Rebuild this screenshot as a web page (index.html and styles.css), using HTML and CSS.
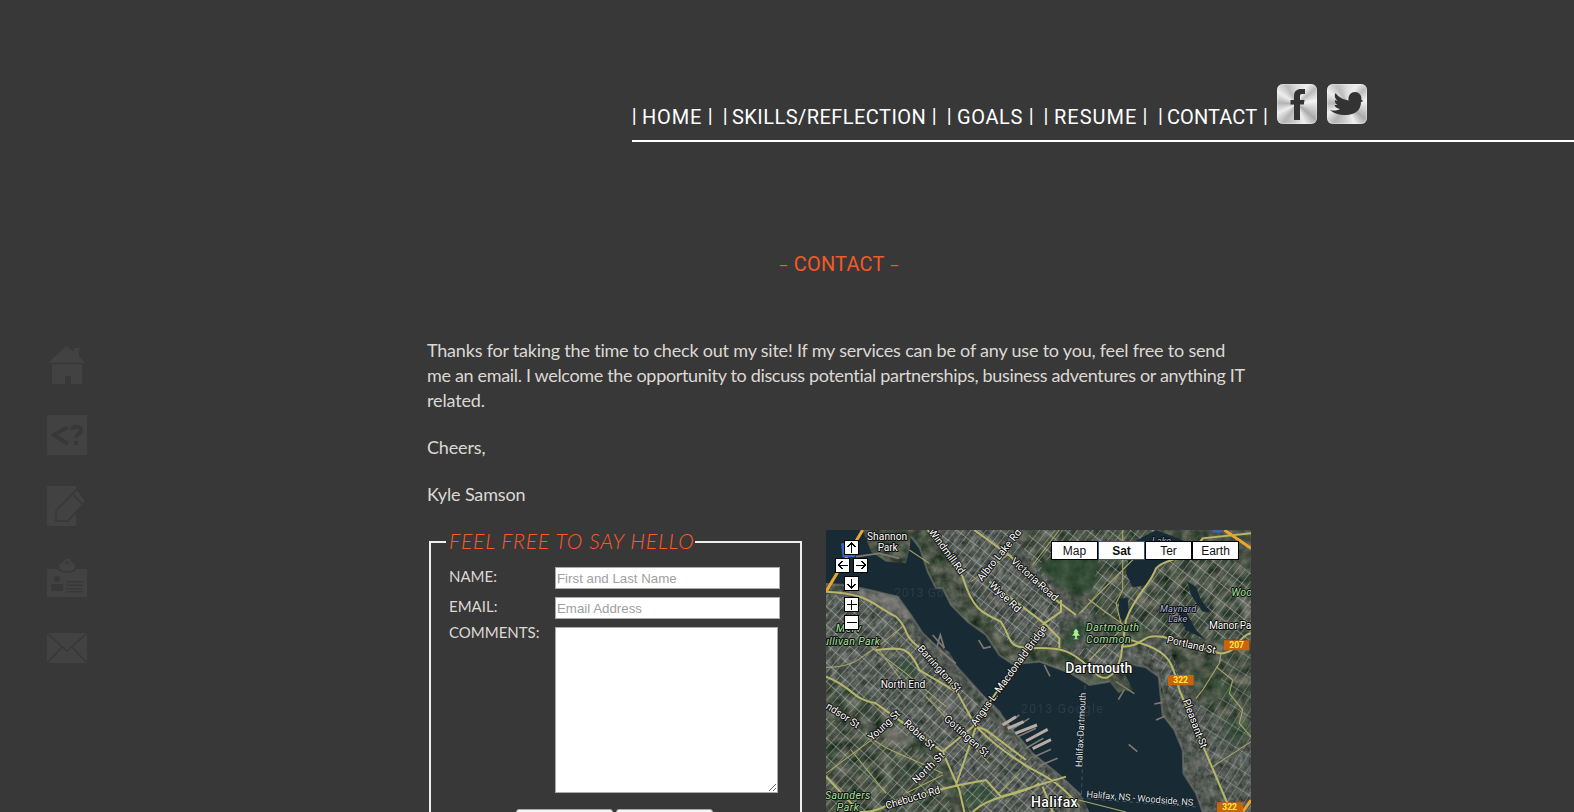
FILE: index.html
```html
<!DOCTYPE html>
<html lang="en">
<head>
<meta charset="utf-8">
<title>Kyle Samson - Contact</title>
<link rel="stylesheet" href="styles.css">
</head>
<body>
<header class="header">
  <nav class="nav">
    <a class="nav-item home"><i>|</i><span>HOME</span><i>|</i></a>
    <a class="nav-item skills"><i>|</i><span>SKILLS/REFLECTION</span><i>|</i></a>
    <a class="nav-item goals"><i>|</i><span>GOALS</span><i>|</i></a>
    <a class="nav-item resume"><i>|</i><span>RESUME</span><i>|</i></a>
    <a class="nav-item contact"><i>|</i><span>CONTACT</span><i>|</i></a>
  </nav>
  <a class="social"><svg width="40" height="40" viewBox="0 0 40 40"><path fill="#333" d="M17 36V20.500h-3.500V16H17v-4c0-5 3-7 7-7h4v5h-3c-1.500 0-2 .8-2 2v4h4.500l-.7 4.500H23V36z"/></svg></a>
  <a class="social"><svg width="40" height="40" viewBox="0 0 40 40"><path fill="#333" d="M3 26c4 1 8 .5 10-1-3-.3-4.500-1.500-5.500-4h3C8 19.500 7.500 17.500 8 16l2.500 1C7.500 14 7 11.500 8.500 9c4 5 8 6.500 13 7.500C21 11 24 8 28 8c2 0 3.500.8 4.500 2 1.500 1 2 3 2 6l2 1-2.500 1C34 26 28 31 19 31 12 31 6 29 3 26z"/></svg></a>
</header>
<div class="page">
  <aside class="side">
    <svg width="40" height="40" viewBox="0 0 40 40"><path d="M1 19 19 2l8 6V4h5v8l6 7H35v21H24v-8h-6v8H5V19z"/><path class="cut-line" d="M2 19.500h36"/></svg>
    <svg width="40" height="40" viewBox="0 0 40 40"><path d="M0 0h40v40H0z"/><path class="cut-line thick" d="M21 12 7 20l14 9M25 15c0-5 9-4 9 0s-5 4-5 8M29 26v4"/></svg>
    <svg width="40" height="40" viewBox="0 0 40 40"><path d="M0 0h29v40H0z"/><path class="pencil" d="M9 25 30 3l9 12-18 20H9z"/><path class="cut-line" d="m26 8 9 10"/></svg>
    <svg width="40" height="40" viewBox="0 0 40 40"><path d="M0 12h11c1 5 17 5 18 0h11v28H0zM12 9c0-4 4-2 5-5s6-3 7 0 4 1 4 5-3 5-8 5-8-1-8-5z"/><circle class="cut" cx="20" cy="6" r="1.500"/><circle class="cut" cx="10" cy="22" r="3"/><path class="cut" d="M4 27h12v7H4zM19 24h17v1.500H19zM19 27.500h17V29H19zM19 31h17v1.500H19zM19 34h17v1.500H19z"/></svg>
    <svg width="40" height="40" viewBox="0 0 40 40"><path d="M0 5h40v30H0z"/><path class="cut-line" d="m0 5 20 18L40 5M0 35l15-16M40 35 25 19"/></svg>
  </aside>
  <main class="main">
    <h1 class="title"><span>–</span> CONTACT <span>–</span></h1>
    <p><span class="l1">Thanks for taking the time to check out my site! If my services can be of any use to you, feel free to send</span><br><span class="l2">me an email. I welcome the opportunity to discuss potential partnerships, business adventures or anything IT</span><br><span>related.</span></p>
    <p>Cheers,</p>
    <p>Kyle Samson</p>
    <div class="row">
      <form class="form">
        <fieldset class="box">
          <legend><span>FEEL FREE TO SAY HELLO</span></legend>
          <div class="field"><label>NAME:</label><input placeholder="First and Last Name"></div>
          <div class="field"><label>EMAIL:</label><input placeholder="Email Address"></div>
          <div class="field comments"><label>COMMENTS:</label><textarea></textarea></div>
          <div class="buttons"><button type="button"></button><button type="button"></button></div>
        </fieldset>
      </form>
      <div class="map">
        <svg class="map-canvas" width="425" height="282" viewBox="0 0 1275 846">
          <defs>
            <filter id="ground" x="0" y="0" width="100%" height="100%" color-interpolation-filters="sRGB">
              <feTurbulence type="fractalNoise" baseFrequency=".03" numOctaves="5" seed="8"/>
              <feColorMatrix values=".5 0 0 0 .03  .42 .08 0 0 .07  .42 .03 0 0 .04  0 0 0 0 1"/>
            </filter>
            <filter id="urban" x="0" y="0" width="100%" height="100%" color-interpolation-filters="sRGB">
              <feTurbulence type="fractalNoise" baseFrequency=".06" numOctaves="4" seed="3" result="n"/>
              <feColorMatrix in="n" values=".6 0 0 0 .05  .55 0 0 0 .09  .55 0 0 0 .09  0 0 0 0 1" result="c"/>
              <feComposite in="c" in2="SourceGraphic" operator="in"/>
            </filter>
            <filter id="soft" x="-20%" y="-20%" width="140%" height="140%"><feGaussianBlur stdDeviation="7"/></filter>
            <pattern id="gridA" width="19" height="42" patternUnits="userSpaceOnUse" patternTransform="rotate(42)"><path d="M0 1.500H19M1.500 0V42" class="street"/></pattern>
            <pattern id="gridB" width="40" height="18" patternUnits="userSpaceOnUse" patternTransform="rotate(-52)"><path d="M0 1.500H40M1.500 0V18" class="street"/></pattern>
            <pattern id="gridC" width="22" height="50" patternUnits="userSpaceOnUse" patternTransform="rotate(32)"><path d="M0 1.500H22M1.500 0V50" class="street"/></pattern>
          </defs>
          <rect width="1275" height="846" filter="url(#ground)"/>
          <g filter="url(#urban)" opacity=".6">
            <path d="M0 160 200 190 265 260 500 500 650 640 760 740 790 846H480L400 760 330 640 130 500 0 440z"/>
            <path d="M260 0H330L440 200 540 320 700 350 850 430 910 400 1000 450 1060 640 1100 846H1275V640L1100 500 1010 320 880 340 760 220 640 120 560 0z"/>
          </g>
          <g filter="url(#soft)">
            <path class="wood" d="M640 100 730 60 830 70 800 190 700 170zM740 270 800 290 740 350 705 350zM420 780 470 760 520 800 450 830 410 820zM215 390 250 380 280 440 230 440zM1150 450 1230 470 1200 510zM1190 570 1260 590 1250 640 1210 630z"/>
            <path class="pale" d="M170 590 260 600 250 650 190 650zM330 490 400 520 370 560zM1080 680 1140 690 1120 720zM650 290 710 310 690 340zM1240 210H1275V280zM60 180 200 190 260 250 240 270z"/>
          </g>
          <path fill="url(#gridA)" d="M0 190 150 220 240 300 500 570 720 780 700 846H430L380 700 330 650 90 560 0 510zM0 560 330 680 380 846H0z"/>
          <path fill="url(#gridB)" d="M330 40 420 150 470 250 550 340 700 350 700 210 550 90 620 0H360zM560 0H1000L1010 130 900 260 760 250 800 180 820 80 720 60 640 100 680 180 640 130zM880 100 1140 30 1275 130V330L1010 320 920 280zM730 360 890 340 880 410 830 420z"/>
          <path fill="url(#gridC)" d="M950 340 1040 380 1090 540 1190 500 1180 390 1275 340V846H1220L1100 640 1010 440z" opacity=".75"/>
          <g class="water">
            <path d="M0 0H110L135 65 180 95 240 100 250 60 255 20 282 55 305 125 330 175 350 175 375 225 425 275 480 315 520 375 560 402 640 395 735 430 790 465 850 455 878 490 895 480 928 493 895 430 925 405 960 412 998 440 1010 555 1045 600 1070 660 1072 730 1110 790 1130 846H790L765 795 735 765 700 735 620 670 560 600 520 540 465 490 400 420 370 365 330 345 290 310 255 255 215 200 140 182 60 165 0 160z"/>
            <path d="M915 40 990 0 1070 30 1075 70 1000 105 965 165 920 172 900 130z"/>
            <path d="M1085 155 1110 170 1125 210 1155 245 1130 245 1095 195zM880 205 905 205 908 255 890 275 878 245zM1050 235 1080 245 1110 300 1140 330 1080 300z"/>
          </g>
          <path class="shore" d="M255 20 282 55 305 125 330 175 350 175 375 225 425 275 480 315 520 375 560 402 640 395 735 430 790 465 850 455M925 405 960 412 998 440 1010 555 1045 600 1070 660 1072 730 1110 790 1130 846M0 162 60 165 140 182 215 200 255 255 290 310 370 385 465 490 560 600 620 670 700 735 765 795"/>
          <path class="pier" d="m320 315 35 40m-22-5 10-35 12 40m-15 5 50 40M458 330l15 25 22-5M655 405l17 34M870 455l55 36m-30-12-18 30M535 585l45-30M555 600l55-35M575 620l55-25M600 655l52-30M625 680l50-22M645 705l50-20M985 522l25-5M990 570l28-12M908 643l26 22M90 80l70-10 60 15"/>
          <path class="dock" d="m530 585 40-25m-25 35 48-20m-25 35 65-25m-33 48 65-35m-45 58 55-27"/>
          <g class="road thin">
            <path d="M0 412C100 412 110 370 145 358L230 290M145 358 240 430 360 530M75 660 180 790M0 730 150 620M120 610C170 660 250 680 350 730M350 735 240 790M620 105 700 0M545 75 435 155M790 210 900 290M760 250 830 180 960 50M890 0V180L870 220 890 300M790 390 890 295M1185 370 1180 400 1130 480 1110 505M1170 410 1220 450 1210 490 1250 540 1240 580 1275 620M1160 710 1275 635M720 800 900 846M250 60 310 100M160 360 225 450M520 790 580 730M300 500 490 700"/>
          </g>
          <g class="road">
            <path d="M305 0 410 140C440 240 470 250 525 275 560 330 540 350 610 355 730 350 740 370 800 420 830 460 865 450 885 380L900 270C930 190 970 170 990 115 1020 80 1080 100 1130 25L1275 10"/>
            <path d="M445 0 555 80 690 210 750 255M490 155 655 280 700 325V355M440 590 655 280 705 245V210M885 350C960 350 940 310 1010 320L1180 370C1240 370 1230 320 1275 310M900 325 960 345C1030 370 1040 400 1060 480L1215 846"/>
            <path d="M0 185C130 190 140 225 210 260 260 310 220 310 290 360L390 480 450 590C500 640 540 670 590 700 630 730 690 740 760 830M150 360C230 350 250 350 280 420L390 485M0 440C80 470 80 510 150 520L205 560 350 665 440 590M350 665 400 780 415 846M250 800 400 765 480 750 525 800 720 740M0 740 100 846M390 765 450 590 480 600 600 690M650 770 680 846M100 846C170 850 200 805 250 800M440 846C500 790 580 800 640 760"/>
          </g>
          <path class="highway" d="M110 0 0 185M1195 0 1275 55M1250 846 1275 810"/>
          <path class="dash" d="m778 445-12 360 350 26"/>
          <g class="watermark"><text x="205" y="202" textLength="225">2013 Google</text><text x="585" y="548" textLength="245">2013 Google</text></g>
          <g class="label">
            <text x="123" y="31" textLength="121">Shannon</text><text x="155" y="63" textLength="60">Park</text>
            <text transform="translate(307 5) rotate(54)" textLength="161">Windmill Rd</text>
            <text transform="translate(468 155) rotate(-51)" textLength="190">Albro Lake Rd</text>
            <text transform="translate(553 96) rotate(42)" textLength="178">Victoria Road</text>
            <text transform="translate(488 167) rotate(44)" textLength="118">Wyse Rd</text>
            <text transform="translate(449 590) rotate(-54)" textLength="365">Angus L. Macdonald Bridge</text>
            <text transform="translate(273 357) rotate(48)" textLength="178">Barrington St</text>
            <text transform="translate(352 569) rotate(42)" textLength="169">Gottingen St</text>
            <text transform="translate(231 582) rotate(43)" textLength="115">Robie St</text>
            <text transform="translate(138 634) rotate(-43)" textLength="118">Young St</text>
            <text transform="translate(271 762) rotate(-44)" textLength="119">North St</text>
            <text transform="translate(182 838) rotate(-17)" textLength="170">Chebucto Rd</text>
            <text transform="translate(-2 534) rotate(33)" textLength="113">ndsor St</text>
            <text transform="translate(1070 512) rotate(69)" textLength="154">Pleasant St</text>
            <text transform="translate(1021 338) rotate(13)" textLength="149">Portland St</text>
            <text transform="translate(768 712) rotate(-87)" textLength="224" class="ferry">Halifax-Dartmouth</text>
            <text transform="translate(781 802) rotate(4.500)" textLength="321" class="ferry">Halifax, NS - Woodside, NS</text>
            <text x="164" y="474" textLength="134">North End</text>
            <text x="1149" y="296" textLength="152">Manor Park</text>
            <text x="718" y="428" textLength="201" class="city">Dartmouth</text>
            <text x="615" y="830" textLength="140" class="city">Halifax</text>
            <text x="978" y="42" class="lake">Lake</text><text x="1002" y="246" textLength="109" class="lake">Maynard</text><text x="1027" y="276" textLength="57" class="lake">Lake</text>
            <g class="park"><text x="30" y="307" textLength="75">Merv</text><text x="-8" y="345" textLength="170">ullivan Park</text><text x="780" y="304" textLength="159">Dartmouth</text><text x="780" y="340" textLength="134">Common</text><text x="1216" y="199">Wood</text><text x="-3" y="807" textLength="136">Saunders</text><text x="32" y="843" textLength="67">Park</text></g>
          </g>
          <path fill="#a9f092" stroke="#243b25" stroke-width="2" d="m750 294 10 13-4 1 8 10h-10v7h5v4h-18v-4h5v-7h-10l8-10-4-1z"/>
          <g class="shield"><path d="M1194 331h76v30h-76zM1026 435h77v31h-77zM1173 817h78v29h-78z"/><text x="1210" y="355" textLength="44">207</text><text x="1042" y="459" textLength="44">322</text><text x="1189" y="841" textLength="44">322</text></g>
          <path fill="#3569bd" d="M45 40h50l-8 42H50zM1158 0h34l-10 8h-18z"/>
        </svg>
        <div class="types"><b class="type">Map</b><b class="type active">Sat</b><b class="type">Ter</b><b class="type">Earth</b></div>
        <svg class="controls" width="33" height="89" viewBox="0 0 33 89" shape-rendering="crispEdges">
          <path fill="#fff" stroke="#000" d="M9.500.5h14v14h-14zM.5 18.500h14v14H.5zM18.500 18.500h14v14h-14zM9.500 36.500h14v14h-14zM9.500 57.500h14v14h-14zM9.500 75.500h14v14h-14z"/>
          <path fill="none" stroke="#000" d="M16.500 3v10M12.500 7.500l4-4 4 4M3 25.500h10M7.500 21.500l-4 4 4 4M21 25.500h10M26.500 21.500l4 4-4 4M16.500 39v10M12.500 44.500l4 4 4-4M16.500 60v10M12 64.500h10M12 82.500h10"/>
        </svg>
      </div>
    </div>
  </main>
</div>
</body>
</html>
```

FILE: styles.css
```css
* { box-sizing: border-box; }
body { margin: 0; height: 812px; overflow: hidden; background: #383838; color: #ddd8d4; font-family: Lato, "Open Sans", sans-serif; }
.header { display: flex; align-items: flex-end; height: 142px; margin-left: 632px; padding-bottom: 16px; border-bottom: 2px solid #fff; color: #fff; }
.nav { display: flex; gap: 12px; padding-left: 1px; margin-right: 10px; font: 20px/28px Roboto, sans-serif; }
.nav-item { display: flex; height: 21px; }
.nav-item i { font-style: normal; width: 3px; display: flex; justify-content: center; font-size: 20px; line-height: 26px; }
.nav-item i:first-child { margin-right: 6px; }
.nav-item i:last-child { margin-left: auto; }
.home { width: 79px; letter-spacing: .8px; }
.skills { width: 212px; letter-spacing: .45px; }
.goals { width: 85px; letter-spacing: .6px; }
.resume { width: 102px; letter-spacing: 1px; }
.contact { width: 108px; letter-spacing: .1px; }
.skills i:first-child, .contact i:first-child { margin-right: 5px; }
.social { width: 40px; height: 40px; margin-right: 10px; border-radius: 6px; background: conic-gradient(#ddd, #eee 8%, #bbb 14%, #f4f4f4 22%, #ccc 30%, #aaa 36%, #eee 44%, #ccc 52%, #b4b4b4 60%, #eee 68%, #b4b4b4 76%, #eee 84%, #bbb 92%, #ddd); box-shadow: inset 0 0 2px #fff; }
.social svg { display: block; }
.page { display: grid; grid-template-columns: 427px 824px; }
.side { display: flex; flex-direction: column; gap: 31px; padding: 202px 0 0 47px; fill: #424242; }
.cut { fill: #383838; }
.cut-line { fill: none; stroke: #383838; stroke-width: 1.5; }
.cut-line.thick { stroke-width: 4; }
.pencil { stroke: #383838; stroke-width: 1.5; }
.title { height: 27px; margin: 109px 0 60px; font: 20px/27px Roboto, sans-serif; letter-spacing: .2px; color: #f15a29; text-align: center; }
.title span { font-size: 15px; line-height: 0; }
.main p { margin: 0 0 22px; font-size: 18px; line-height: 25px; letter-spacing: -.15px; white-space: nowrap; }
.main .l1 { letter-spacing: -.2px; }
.main .l2 { letter-spacing: -.33px; }
.row { display: flex; justify-content: space-between; margin-top: 23px; }
.form { width: 375px; padding: 0 0 0 2px; }
.box { height: 330px; margin: 0; padding: 13px 0 0 18px; border: 2px solid #eee; }
.box legend { margin-left: -3px; padding: 0 0 0 3px; height: 24px; font-size: 21px; line-height: 22px; letter-spacing: .8px; font-style: italic; font-weight: 300; color: #ff5a26; white-space: nowrap; }
.field { display: flex; align-items: flex-start; margin-bottom: 8px; }
.field label { width: 106px; font-size: 15px; line-height: 19px; }
.field.comments label { line-height: 11px; }
.field input { width: 225px; height: 22px; padding: 1px; border: 1px solid #aaa; background: #fff; font: 13.3px "Liberation Sans", Arial, sans-serif; }
.field input::placeholder { color: #a0a0a0; }
.field textarea { width: 223px; height: 166px; border: 1px solid #aaa; background: #fff; }
.buttons { display: flex; gap: 3px; margin: 16px 0 0 67px; }
.buttons button { width: 97px; height: 24px; border: 1px solid #aaa; border-radius: 3px; background: #f4f4f4; }
.map { position: relative; width: 425px; height: 282px; overflow: hidden; }
.map-canvas { display: block; }
.types { position: absolute; left: 225px; top: 11px; display: flex; }
.type { width: 47px; height: 19px; border: 1px solid #000; background: #fff; color: #111; font: 12px/18px "Liberation Sans", Arial, sans-serif; text-align: center; }
.type.active { font-weight: bold; border-color: #345684; }
.controls { position: absolute; left: 9px; top: 9px; height: 90px; overflow: visible; }
.street { fill: none; stroke: #b4bab6; stroke-width: 2.4; opacity: .6; }
.wood { fill: #294a2c; opacity: .6; }
.pale { fill: #a59b9b; opacity: .4; }
.water { fill: #182a33; }
.shore { fill: none; stroke: #77766f; stroke-width: 6; opacity: .6; }
.pier { fill: none; stroke: #7e7973; stroke-width: 5; }
.dock { fill: none; stroke: #b8aaa5; stroke-width: 9; }
.road { fill: none; stroke: #b7b66b; stroke-width: 6; }
.road.thin { stroke-width: 3.3; stroke: #a5a665; }
.highway { fill: none; stroke: #eaa52e; stroke-width: 9; }
.dash { fill: none; stroke: #52677b; stroke-width: 2; stroke-dasharray: 12 9; }
.watermark { font: 36px Roboto, sans-serif; fill: #70818a; opacity: .2; }
.label { font: 31px Roboto, sans-serif; fill: #fff; stroke: #111; stroke-width: 6; stroke-linejoin: round; paint-order: stroke; }
.label .ferry { font-size: 28px; fill: #dbe6ef; stroke-width: 4; }
.label .city { font-size: 42px; font-weight: 500; }
.label .lake { font-size: 28px; font-style: italic; fill: #a9b1df; }
.label .park { font-size: 32px; font-style: italic; fill: #a4e39b; }
.shield { font: bold 26px Roboto, sans-serif; fill: #cb620c; }
.shield text { fill: #ffeb47; }
```
